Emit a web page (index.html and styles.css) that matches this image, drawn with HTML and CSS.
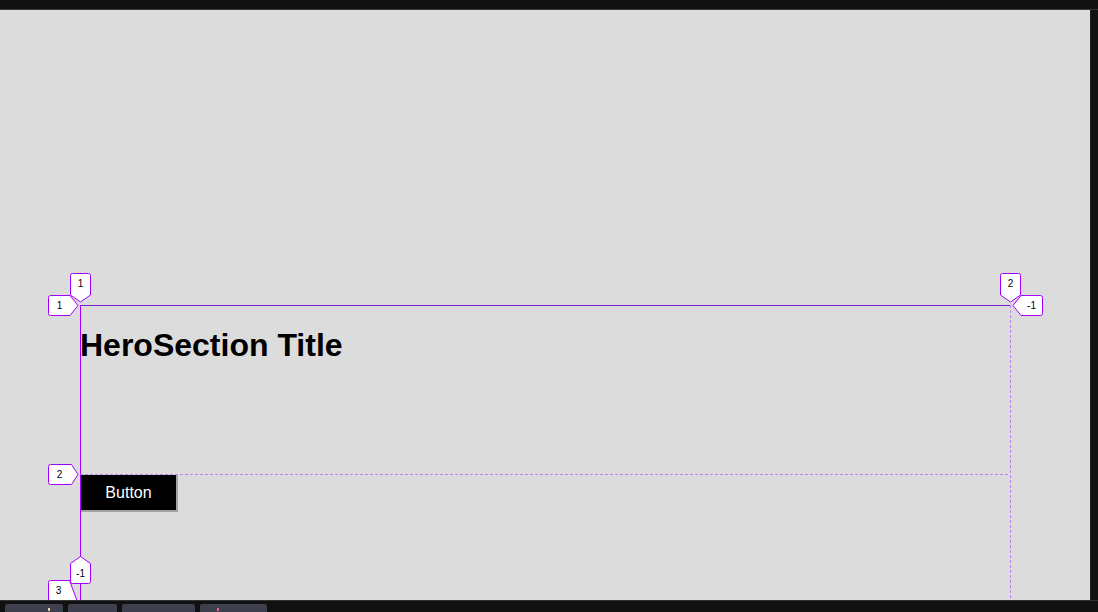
FILE: index.html
```html
<!DOCTYPE html>
<html lang="en">
<head>
<meta charset="utf-8">
<title>HeroSection</title>
<link rel="stylesheet" href="styles.css">
</head>
<body>
<div class="topbar"></div>
<div class="main">
  <div class="viewport">
    <section class="hero">
      <div class="hero-row1">
        <h1 class="hero-title">HeroSection Title</h1>
      </div>
      <div class="hero-row2">
        <button class="hero-btn">Button</button>
      </div>
    </section>

    <div class="grid-overlay">
      <div class="gl gl-top"></div>
      <div class="gl gl-left"></div>
      <div class="gl gl-right"></div>
      <div class="gl gl-row2"></div>

      <div class="lbl lbl-col1">
        <svg width="22" height="30" viewBox="0 0 22 30"><path d="M0.5 2.5 Q0.5 0.5 2.5 0.5 H18.5 Q20.5 0.5 20.5 2.5 V22 L10.5 29 L0.5 22 Z"/></svg>
        <span class="lt lt-down">1</span>
      </div>
      <div class="lbl lbl-col2">
        <svg width="22" height="30" viewBox="0 0 22 30"><path d="M0.5 2.5 Q0.5 0.5 2.5 0.5 H18.5 Q20.5 0.5 20.5 2.5 V22 L10.5 29 L0.5 22 Z"/></svg>
        <span class="lt lt-down">2</span>
      </div>
      <div class="lbl lbl-colm1">
        <svg width="22" height="29" viewBox="0 0 22 29"><path d="M0.5 7.5 L10.5 0.5 L20.5 7.5 V25.5 Q20.5 27.5 18.5 27.5 H2.5 Q0.5 27.5 0.5 25.5 Z"/></svg>
        <span class="lt lt-up">-1</span>
      </div>
      <div class="lbl lbl-row1">
        <svg width="31" height="22" viewBox="0 0 31 22"><path d="M2.5 0.5 H22 L30 10.5 L22 20.5 H2.5 Q0.5 20.5 0.5 18.5 V2.5 Q0.5 0.5 2.5 0.5 Z"/></svg>
        <span class="lt lt-right">1</span>
      </div>
      <div class="lbl lbl-row2">
        <svg width="31" height="22" viewBox="0 0 31 22"><path d="M2.5 0.5 H23.5 L30 10.5 L23.5 20.5 H2.5 Q0.5 20.5 0.5 18.5 V2.5 Q0.5 0.5 2.5 0.5 Z"/></svg>
        <span class="lt lt-right">2</span>
      </div>
      <div class="lbl lbl-row3">
        <svg width="34" height="32" viewBox="0 0 34 32"><path d="M2.5 0.5 H21.5 L31 26 V31 H0.5 V2.5 Q0.5 0.5 2.5 0.5 Z"/></svg>
        <span class="lt lt-row3">3</span>
      </div>
      <div class="lbl lbl-rowm1">
        <svg width="31" height="22" viewBox="0 0 31 22"><path d="M28.5 0.5 H9 L1 10.5 L9 20.5 H28.5 Q30.5 20.5 30.5 18.5 V2.5 Q30.5 0.5 28.5 0.5 Z"/></svg>
        <span class="lt lt-left">-1</span>
      </div>
    </div>
  </div>
  <div class="scrollstrip"></div>
</div>
<div class="bottombar">
  <div class="tab tab-a"><span class="tab-dot dot-a"></span></div>
  <div class="tab tab-b"></div>
  <div class="tab tab-c"></div>
  <div class="tab tab-d"><span class="tab-dot dot-d"></span></div>
</div>
</body>
</html>
```

FILE: styles.css
```css
* { box-sizing: border-box; }

html, body {
  margin: 0;
  padding: 0;
  width: 1098px;
  height: 612px;
  overflow: hidden;
  background: #111111;
  font-family: "Liberation Sans", Arial, sans-serif;
}

.topbar {
  height: 10px;
  background: #111111;
  border-bottom: 1px solid #3a3a3a;
}

.main {
  display: flex;
  height: 590px;
}

.viewport {
  position: relative;
  width: 1090px;
  height: 590px;
  background: #dcdcdc;
  overflow: hidden;
  padding: 295px 0 0 80px;
}

.scrollstrip {
  width: 8px;
  background: #111111;
  border-left: 1px solid #1c1c1c;
}

.hero {
  width: 930px;
  display: grid;
  grid-template-rows: 169px auto;
}

.hero-row1 {
  display: flex;
  flex-direction: column;
}

.hero-title {
  margin: 22px 0 0;
  font-size: 32px;
  line-height: 37px;
  font-weight: 700;
  color: #000000;
}

.hero-row2 {
  display: flex;
  align-items: flex-start;
}

.hero-btn {
  margin: 1px 0 0 1px;
  width: 97px;
  height: 37px;
  padding: 1px 0 0;
  background: #000000;
  color: #ffffff;
  font-family: "Liberation Sans", Arial, sans-serif;
  font-size: 16px;
  border: none;
  border-right: 2px solid #a3a3a3;
  border-bottom: 2px solid #a3a3a3;
}

/* devtools grid overlay */
.grid-overlay {
  position: absolute;
  inset: 0;
  pointer-events: none;
}

.gl { position: absolute; }

.gl-top {
  left: 80px;
  top: 295px;
  width: 930px;
  height: 1px;
  background: #7a1ccc;
}

.gl-left {
  left: 80px;
  top: 295px;
  width: 1px;
  height: 300px;
  background: #a000ff;
}

.gl-right {
  left: 1010px;
  top: 295px;
  width: 1px;
  height: 300px;
  background: repeating-linear-gradient(to bottom, #bf7cf2 0 3px, transparent 3px 5px);
}

.gl-row2 {
  left: 80px;
  top: 464px;
  width: 930px;
  height: 1px;
  background: repeating-linear-gradient(to right, #bf7cf2 0 3px, transparent 3px 5px);
}

.lbl {
  position: absolute;
  font-family: "Liberation Sans", Arial, sans-serif;
  font-size: 10px;
  color: #000000;
}

.lbl svg {
  display: block;
}

.lbl svg path {
  fill: #ffffff;
  stroke: #a000ff;
  stroke-width: 1;
}

.lt {
  position: absolute;
  display: flex;
  align-items: center;
  justify-content: center;
  line-height: 1;
}

.lt-down { left: 0; top: 0; width: 21px; height: 21px; }
.lt-up { left: 0; top: 8px; width: 21px; height: 20px; }
.lt-right { left: 0; top: 0; width: 23px; height: 21px; }
.lt-left { left: 8px; top: 0; width: 23px; height: 21px; }
.lt-row3 { left: 0; top: 0; width: 21px; height: 21px; }

.lbl-col1 { left: 70px; top: 263px; }
.lbl-col2 { left: 1000px; top: 263px; }
.lbl-colm1 { left: 70px; top: 546px; }
.lbl-row1 { left: 48px; top: 285px; }
.lbl-row2 { left: 48px; top: 454px; }
.lbl-row3 { left: 48px; top: 570px; }
.lbl-rowm1 { left: 1012px; top: 285px; }

.bottombar {
  display: flex;
  gap: 5px;
  height: 12px;
  padding: 3px 0 0 5px;
  background: #111111;
  border-top: 1px solid #333333;
}

.tab {
  position: relative;
  height: 10px;
  background: #3e414d;
  border-radius: 2px 2px 0 0;
}

.tab-a { width: 58px; }
.tab-b { width: 49px; }
.tab-c { width: 73px; }
.tab-d { width: 67px; }

.tab-dot {
  position: absolute;
  top: 4px;
  width: 2px;
  height: 3px;
}

.dot-a { left: 43px; background: #e8d0b0; }
.dot-d { left: 17px; background: #e06090; }
```
